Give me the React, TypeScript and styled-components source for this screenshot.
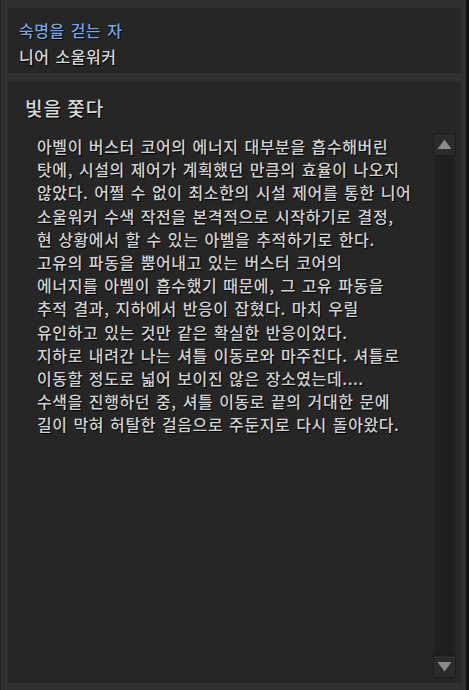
import styled, { createGlobalStyle } from "styled-components";

const GlobalStyle = createGlobalStyle`
  html, body {
    margin: 0;
    padding: 0;
    background-color: #2f2f2f;
  }
  * {
    box-sizing: border-box;
  }
`;

const Frame = styled.div`
  width: 469px;
  height: 690px;
  display: flex;
  flex-direction: column;
  gap: 9px;
  padding: 8px 5px 7px 7px;
  background-color: #303030;
  border-left: 1px solid #232323;
  border-right: 3px solid #141414;
  font-family: "Noto Sans CJK KR", "Noto Sans", sans-serif;
  font-weight: 500;
  text-shadow: 1px 1px 1px #000;
`;

const Panel = styled.div<{ $grow?: boolean }>`
  background-color: #262626;
  display: flex;
  flex-direction: column;
  flex: ${(p) => (p.$grow ? "1" : "none")};
  min-height: 0;
`;

const Header = styled(Panel)`
  height: 65px;
  padding: 9px 11px;
`;

const HeaderLine = styled.div<{ $accent?: boolean }>`
  font-size: 16px;
  line-height: 26px;
  letter-spacing: 0.5px;
  word-spacing: 2px;
  color: ${(p) => (p.$accent ? "#78a6ea" : "#d6d6d6")};
`;

const Title = styled.div`
  font-size: 19px;
  line-height: 24px;
  letter-spacing: 1px;
  color: #d8d8d8;
  padding: 14px 0 0 17px;
  height: 51px;
`;

const Body = styled.div`
  flex: 1;
  display: flex;
  min-height: 0;
  padding: 0 5px 5px 29px;
`;

const Story = styled.div`
  flex: 1;
  font-size: 16px;
  line-height: 23.2px;
  letter-spacing: 0.6px;
  word-spacing: 1.7px;
  color: #d2d2d2;
  padding-top: 2px;
  white-space: nowrap;
`;

const ScrollBar = styled.div`
  width: 23px;
  display: flex;
  flex-direction: column;
  align-items: center;
`;

const Track = styled.div`
  flex: 1;
  width: 19px;
  background-color: #1f1f1f;
`;

const ArrowButton = styled.div`
  width: 23px;
  height: 23px;
  display: flex;
  align-items: center;
  justify-content: center;
  background-color: #2b2b2b;
  border: 1px solid #1c1c1c;
`;

const lines = [
  "아벨이 버스터 코어의 에너지 대부분을 흡수해버린",
  "탓에, 시설의 제어가 계획했던 만큼의 효율이 나오지",
  "않았다. 어쩔 수 없이 최소한의 시설 제어를 통한 니어",
  "소울워커 수색 작전을 본격적으로 시작하기로 결정,",
  "현 상황에서 할 수 있는 아벨을 추적하기로 한다.",
  "고유의 파동을 뿜어내고 있는 버스터 코어의",
  "에너지를 아벨이 흡수했기 때문에, 그 고유 파동을",
  "추적 결과, 지하에서 반응이 잡혔다. 마치 우릴",
  "유인하고 있는 것만 같은 확실한 반응이었다.",
  "지하로 내려간 나는 셔틀 이동로와 마주친다. 셔틀로",
  "이동할 정도로 넓어 보이진 않은 장소였는데....",
  "수색을 진행하던 중, 셔틀 이동로 끝의 거대한 문에",
  "길이 막혀 허탈한 걸음으로 주둔지로 다시 돌아왔다.",
];

const Arrow = ({ up }: { up?: boolean }) => (
  <svg width="15" height="11" viewBox="0 0 15 11">
    <polygon
      points={up ? "7.5,0.5 14.5,10 0.5,10" : "0.5,1 14.5,1 7.5,10.5"}
      fill="#8a8a8e"
    />
  </svg>
);

const App = () => {
  return (
    <Frame>
      <GlobalStyle />
      <Header>
        <HeaderLine $accent>숙명을 걷는 자</HeaderLine>
        <HeaderLine>니어 소울워커</HeaderLine>
      </Header>
      <Panel $grow>
        <Title>빛을 쫓다</Title>
        <Body>
          <Story>
            {lines.map((line) => (
              <div key={line}>{line}</div>
            ))}
          </Story>
          <ScrollBar>
            <ArrowButton>
              <Arrow up />
            </ArrowButton>
            <Track />
            <ArrowButton>
              <Arrow />
            </ArrowButton>
          </ScrollBar>
        </Body>
      </Panel>
    </Frame>
  );
};

export default App;
